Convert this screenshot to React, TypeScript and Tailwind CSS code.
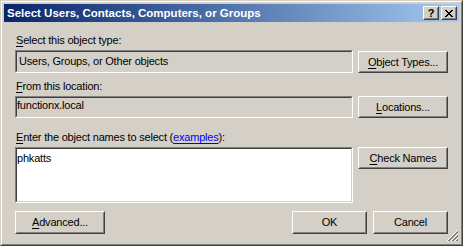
import React from "react";

const font = { fontFamily: '"Liberation Sans", Arial, sans-serif' };

function U({ children }: { children: React.ReactNode }) {
  return <span className="underline underline-offset-[2px]">{children}</span>;
}

function Button({ className = "", children }: { className?: string; children: React.ReactNode }) {
  return (
    <div
      className={`border border-t-white border-l-white border-r-[#404040] border-b-[#404040] bg-[#d4d0c8] ${className}`}
    >
      <div className="h-full border border-t-[#d4d0c8] border-l-[#d4d0c8] border-r-[#808080] border-b-[#808080] flex items-center justify-center text-[11px] leading-[13px] tracking-[-0.2px] text-black">
        {children}
      </div>
    </div>
  );
}

function Sunken({ className = "", inner = "", children }: { className?: string; inner?: string; children?: React.ReactNode }) {
  return (
    <div className={`border border-t-[#808080] border-l-[#808080] border-r-white border-b-white ${className}`}>
      <div
        className={`h-full border border-t-[#404040] border-l-[#404040] border-r-[#d4d0c8] border-b-[#d4d0c8] text-[11px] leading-[13px] tracking-[-0.2px] text-black ${inner}`}
      >
        {children}
      </div>
    </div>
  );
}

function CaptionButton({ children }: { children: React.ReactNode }) {
  return (
    <div className="w-[16px] h-[14px] border border-t-white border-l-white border-r-[#404040] border-b-[#404040] bg-[#d4d0c8]">
      <div className="h-full border border-t-[#d4d0c8] border-l-[#d4d0c8] border-r-[#808080] border-b-[#808080] flex items-center justify-center">
        {children}
      </div>
    </div>
  );
}

export default function App() {
  return (
    <div style={font} className="w-[463px] h-[246px] border border-t-[#d4d0c8] border-l-[#d4d0c8] border-r-[#404040] border-b-[#404040] bg-[#d4d0c8] select-none">
      <div className="h-full border border-t-white border-l-white border-r-[#808080] border-b-[#808080] p-[2px] flex flex-col">
        {/* title bar */}
        <div className="h-[18px] shrink-0 flex items-center bg-gradient-to-r from-[#0a246a] to-[#a6caf0] pl-[3px] pr-[2px]">
          <span className="flex-1 text-white font-bold text-[11.5px] leading-[13px] whitespace-nowrap">
            Select Users, Contacts, Computers, or Groups
          </span>
          <div className="flex gap-[2px]">
            <CaptionButton>
              <span className="text-black font-bold text-[11px] leading-[10px]">?</span>
            </CaptionButton>
            <CaptionButton>
              <svg width="8" height="7" viewBox="0 0 8 7" shapeRendering="crispEdges">
                <path d="M0 0h2v1h-2zM6 0h2v1h-2zM1 1h2v1h-2zM5 1h2v1h-2zM2 2h4v1h-4zM3 3h2v1h-2zM2 4h4v1h-4zM1 5h2v1h-2zM5 5h2v1h-2zM0 6h2v1h-2zM6 6h2v1h-2z" fill="#000" />
              </svg>
            </CaptionButton>
          </div>
        </div>

        {/* body */}
        <div className="relative flex-1 px-[11px] pt-[12px] flex flex-col text-[11px] leading-[13px] tracking-[-0.2px] text-black">
          <div className="pl-px">
            <U>S</U>elect this object type:
          </div>
          <div className="mt-[3px] flex gap-[5px]">
            <Sunken className="w-[338px] h-[23px] bg-[#d4d0c8]" inner="flex items-center pl-[2px]">
              Users, Groups, or Other objects
            </Sunken>
            <Button className="w-[90px] h-[22px] mt-px">
              <span>
                <U>O</U>bject Types...
              </span>
            </Button>
          </div>

          <div className="mt-[7px] pl-px">
            <U>F</U>rom this location:
          </div>
          <div className="mt-[3px] flex gap-[5px]">
            <Sunken className="w-[338px] h-[22px] bg-[#d4d0c8]" inner="pt-[1px]">
              functionx.local
            </Sunken>
            <Button className="w-[90px] h-[22px]">
              <span>
                <U>L</U>ocations...
              </span>
            </Button>
          </div>

          <div className="mt-[13px] pl-px">
            <U>E</U>nter the object names to select (
            <span className="text-[#0000ff] underline underline-offset-[2px]">examples</span>):
          </div>
          <div className="mt-[3px] flex gap-[5px] items-start">
            <Sunken className="w-[338px] h-[56px] bg-white" inner="pt-[3px]">
              phkatts
            </Sunken>
            <Button className="w-[90px] h-[22px]">
              <span>
                <U>C</U>heck Names
              </span>
            </Button>
          </div>

          <div className="mt-[8px] flex">
            <Button className="w-[90px] h-[23px]">
              <span>
                <U>A</U>dvanced...
              </span>
            </Button>
            <div className="flex-1" />
            <Button className="w-[75px] h-[23px]">OK</Button>
            <Button className="w-[75px] h-[23px] ml-[6px]">Cancel</Button>
          </div>

          {/* size grip */}
          <svg className="absolute right-0 bottom-0" width="12" height="12" viewBox="0 0 12 12" shapeRendering="crispEdges">
            <path d="M11 0L0 11M11 4L4 11M11 8L8 11" stroke="#fff" strokeWidth="1" />
            <path d="M11 1L1 11M11 2L2 11M11 5L5 11M11 6L6 11M11 9L9 11M11 10L10 11" stroke="#808080" strokeWidth="1" />
          </svg>
        </div>
      </div>
    </div>
  );
}
